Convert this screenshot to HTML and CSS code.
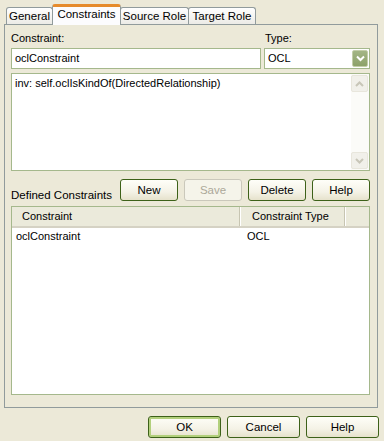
FILE: index.html
```html
<!DOCTYPE html>
<html lang="en">
<head>
    <meta charset="UTF-8">
    <title>Constraints</title>
    <link rel="stylesheet" href="styles.css">
</head>
<body>
<div class="dialog">
    <div class="tabs">
        <div class="tab tab-general">General</div>
        <div class="tab tab-active">Constraints</div>
        <div class="tab tab-source">Source Role</div>
        <div class="tab tab-target">Target Role</div>
    </div>

    <div class="panel">
        <div class="fields">
            <div class="field">
                <label class="caption">Constraint:</label>
                <div class="textbox">oclConstraint</div>
            </div>
            <div class="field">
                <label class="caption">Type:</label>
                <div class="combo">
                    <span>OCL</span>
                    <span class="combo-btn">
                        <svg width="9" height="7" viewBox="0 0 9 7"><polyline points="1,1.5 4.5,5 8,1.5" fill="none" stroke="#fff" stroke-width="2"/></svg>
                    </span>
                </div>
            </div>
        </div>

        <div class="editor">
            <div class="editor-text">inv: self.oclIsKindOf(DirectedRelationship)</div>
            <div class="vscroll">
                <span class="scroll-btn">
                    <svg width="9" height="6" viewBox="0 0 9 6"><polyline points="1,5 4.5,1.5 8,5" fill="none" stroke="#c8c6b8" stroke-width="2"/></svg>
                </span>
                <span class="scroll-track"></span>
                <span class="scroll-btn">
                    <svg width="9" height="6" viewBox="0 0 9 6"><polyline points="1,1 4.5,4.5 8,1" fill="none" stroke="#c8c6b8" stroke-width="2"/></svg>
                </span>
            </div>
        </div>

        <div class="toolbar">
            <span class="toolbar-label">Defined Constraints</span>
            <button class="btn">New</button>
            <button class="btn" disabled>Save</button>
            <button class="btn">Delete</button>
            <button class="btn">Help</button>
        </div>

        <div class="list">
            <div class="list-head">
                <span class="col col-name">Constraint</span>
                <span class="col col-type">Constraint Type</span>
                <span class="col col-rest"></span>
            </div>
            <div class="list-row">
                <span class="cell cell-name">oclConstraint</span>
                <span class="cell cell-type">OCL</span>
            </div>
        </div>
    </div>

    <div class="footer">
        <button class="btn btn-wide btn-default">OK</button>
        <button class="btn btn-wide">Cancel</button>
        <button class="btn btn-wide">Help</button>
    </div>
</div>
</body>
</html>
```

FILE: styles.css
```css
body {
    margin: 0;
    width: 384px;
    height: 441px;
    background-color: #ece9d8;
    font-family: "Liberation Sans", Arial, sans-serif;
    font-size: 11px;
    color: #000;
    overflow: hidden;
}
.dialog {
    padding: 4px 0 0 4px;
}

/* tabs */
.tabs {
    display: flex;
    align-items: flex-end;
    height: 20px;
    padding-left: 2px;
}
.tab {
    box-sizing: border-box;
    height: 17px;
    border: 1px solid #919b9c;
    border-bottom: none;
    border-radius: 3px 3px 0 0;
    background: linear-gradient(#ffffff, #ecebe6);
    text-align: center;
    line-height: 16px;
    font-size: 11.5px;
}
.tab-general {
    width: 47px;
}
.tab-source {
    width: 69px;
}
.tab-target {
    width: 68px;
    margin-left: -1px;
}
.tab-active {
    position: relative;
    z-index: 1;
    width: 69px;
    height: 21px;
    margin: 0 -1px -1px -1px;
    border-top: 3px solid #e68b2c;
    background: #fcfcfe;
    line-height: 15px;
}

/* panel */
.panel {
    box-sizing: border-box;
    width: 374px;
    height: 384px;
    border: 1px solid #919b9c;
    padding: 6px 7px 0 6px;
}
.fields {
    display: grid;
    grid-template-columns: 250px 106px;
    column-gap: 3px;
}
.caption {
    display: block;
    height: 13px;
    line-height: 13px;
    margin-bottom: 3px;
    margin-top: 1px;
}
.field:last-child .caption {
    margin-left: 1px;
}
.textbox, .combo {
    box-sizing: border-box;
    height: 21px;
    border: 1px solid #a5b88c;
    background: #fff;
    line-height: 19px;
    padding-left: 3px;
}
.combo {
    display: flex;
    justify-content: space-between;
}
.combo-btn {
    box-sizing: border-box;
    display: flex;
    align-items: center;
    justify-content: center;
    width: 16px;
    height: 17px;
    margin: 1px 1px 0 0;
    border: 1px solid #c3cea9;
    border-radius: 2px;
    background: linear-gradient(#a3b585, #8da26a);
}

.editor {
    box-sizing: border-box;
    display: flex;
    height: 98px;
    margin-top: 4px;
    border: 1px solid #a5b88c;
    background: #fff;
}
.editor-text {
    flex: 1;
    padding: 3px 0 0 3px;
    line-height: 13px;
}
.vscroll {
    display: flex;
    flex-direction: column;
    width: 17px;
    padding: 1px 1px 1px 0;
    background: #fbfbf8;
}
.scroll-btn {
    box-sizing: border-box;
    display: flex;
    align-items: center;
    justify-content: center;
    height: 17px;
    border: 1px solid #e8e6dc;
    border-radius: 2px;
    background: #f1f0ea;
}
.scroll-track {
    flex: 1;
}

/* buttons */
.toolbar {
    display: flex;
    align-items: flex-end;
    gap: 6px;
    margin-top: 8px;
}
.toolbar-label {
    flex: 1;
    line-height: 13px;
    margin-bottom: -1px;
    font-size: 11.5px;
}
.btn {
    box-sizing: border-box;
    width: 58px;
    height: 22px;
    padding: 0;
    border: 1px solid #3d6119;
    border-radius: 3px;
    background: linear-gradient(#fefef8, #f4f2e6 60%, #e6e2cc);
    font-family: inherit;
    font-size: 11.5px;
    color: #000;
}
.btn:disabled {
    border-color: #cac8bb;
    background: #f5f4ea;
    color: #aca899;
}
.btn-wide {
    width: 73px;
}
.btn-default {
    box-shadow: inset 0 0 0 2px #b2d07c;
}

/* list */
.list {
    box-sizing: border-box;
    height: 189px;
    margin-top: 5px;
    border: 1px solid #a5b88c;
    background: #fff;
}
.list-head {
    display: flex;
    height: 19px;
    background: #ebeadb;
    border-bottom: 2px solid #d5d2c4;
}
.col {
    box-sizing: border-box;
    height: 100%;
    line-height: 19px;
    border-right: 1px solid #fff;
    box-shadow: inset -1px 0 0 #c7c5b2;
}
.col-name {
    width: 229px;
    padding-left: 10px;
}
.col-type {
    width: 105px;
    padding-left: 11px;
}
.col-rest {
    flex: 1;
    border: none;
    box-shadow: none;
}
.list-row {
    display: flex;
    height: 14px;
    line-height: 14px;
    margin-top: 1px;
}
.cell-name {
    width: 229px;
    padding-left: 4px;
}
.cell-type {
    padding-left: 2px;
}

.footer {
    display: flex;
    justify-content: flex-end;
    gap: 6px;
    margin-top: 8px;
    padding-right: 5px;
}
```
